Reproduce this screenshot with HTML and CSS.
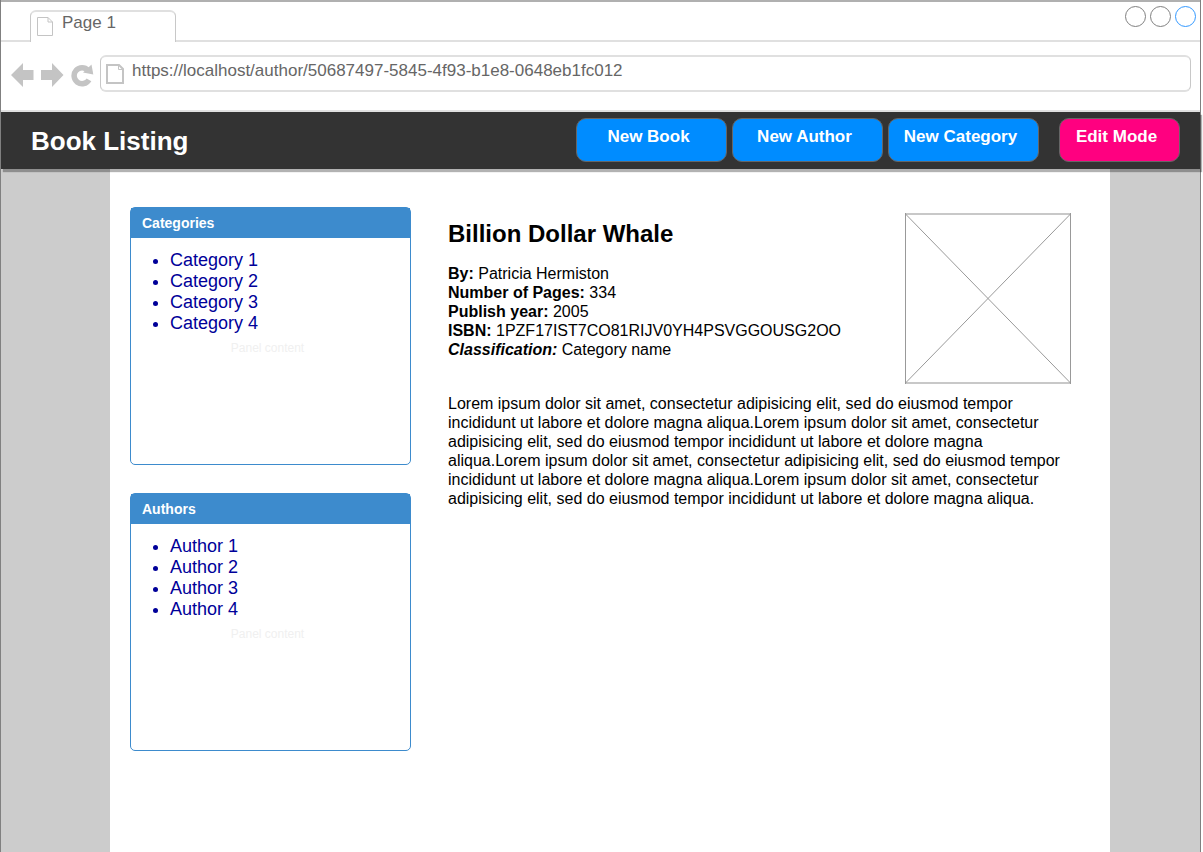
FILE: index.html
```html
<!DOCTYPE html>
<html lang="en">
<head>
<meta charset="utf-8">
<title>Book Listing</title>
<link rel="stylesheet" href="styles.css">
</head>
<body>
<div class="window">
  <div class="tab-strip">
    <div class="tab">
      <svg class="tab-icon" width="16" height="19" viewBox="0 0 16 19" fill="none" stroke="#c4c4c4"><path d="M.5 .5H11L15.500 5V18.500H.5ZM11 .5V5H15.500"/></svg>
      <span class="tab-title">Page 1</span>
    </div>
    <div class="window-controls">
      <button class="control" aria-label="Minimize"></button>
      <button class="control" aria-label="Maximize"></button>
      <button class="control control-close" aria-label="Close"></button>
    </div>
  </div>
  <div class="toolbar">
    <button class="nav" aria-label="Back"><svg width="23" height="26" viewBox="0 0 23 26" fill="#c4c4c4"><path d="M0 13L12 1V8H22.500V18H12V25Z"/></svg></button>
    <button class="nav nav-forward" aria-label="Forward"><svg width="23" height="26" viewBox="0 0 23 26" fill="#c4c4c4"><path d="M22.500 13L11 1V8H0V18H11V25Z"/></svg></button>
    <button class="nav nav-reload" aria-label="Reload"><svg width="23" height="26" viewBox="0 0 23 26"><path d="M17 8.300A8 8 0 1 0 18 17.800" fill="none" stroke="#c4c4c4" stroke-width="5.500"/><path d="M20.500 2.500L22.300 12.500L12 10.500Z" fill="#c4c4c4"/></svg></button>
    <label class="address">
      <svg width="18" height="20" viewBox="0 0 18 20" fill="none" stroke="#c4c4c4"><path d="M1 1H13L17 5V19H1Z" stroke-width="2"/><path d="M12.500 1V5.500H17"/></svg>
      <input class="url" type="text" aria-label="Address" value="https://localhost/author/50687497-5845-4f93-b1e8-0648eb1fc012">
    </label>
  </div>
  <header class="header">
    <h1 class="brand">Book Listing</h1>
    <div class="actions">
      <button class="action">New Book</button>
      <button class="action">New Author</button>
      <button class="action">New Category</button>
      <button class="action action-edit">Edit Mode</button>
    </div>
  </header>
  <div class="backdrop">
    <div class="page">
      <aside class="sidebar">
        <section class="panel">
          <h2 class="panel-title">Categories</h2>
          <ul class="links">
            <li><a href="#">Category 1</a></li>
            <li><a href="#">Category 2</a></li>
            <li><a href="#">Category 3</a></li>
            <li><a href="#">Category 4</a></li>
          </ul>
          <p class="panel-note">Panel content</p>
        </section>
        <section class="panel">
          <h2 class="panel-title">Authors</h2>
          <ul class="links">
            <li><a href="#">Author 1</a></li>
            <li><a href="#">Author 2</a></li>
            <li><a href="#">Author 3</a></li>
            <li><a href="#">Author 4</a></li>
          </ul>
          <p class="panel-note">Panel content</p>
        </section>
      </aside>
      <main class="book">
        <div class="summary">
          <div class="details">
            <h2 class="book-title">Billion Dollar Whale</h2>
            <div><b>By:</b> Patricia Hermiston</div>
            <div><b>Number of Pages:</b> 334</div>
            <div><b>Publish year:</b> 2005</div>
            <div><b>ISBN:</b> 1PZF17IST7CO81RIJV0YH4PSVGGOUSG2OO</div>
            <div><b><i>Classification:</i></b> Category name</div>
          </div>
          <svg class="cover" width="166" height="171" viewBox="0 0 166 171" fill="none"><path d="M0 1H166M0 170H166" stroke="#c8c8c8" stroke-width="2"/><path d="M.5 0V171M165.500 0V171" stroke="#999"/><path d="M.5 1L165.500 170M165.500 1L.5 170" stroke="#999"/></svg>
        </div>
        <p class="description">Lorem ipsum dolor sit amet, consectetur adipisicing elit, sed do eiusmod tempor incididunt ut labore et dolore magna aliqua.Lorem ipsum dolor sit amet, consectetur adipisicing elit, sed do eiusmod tempor incididunt ut labore et dolore magna aliqua.Lorem ipsum dolor sit amet, consectetur adipisicing elit, sed do eiusmod tempor incididunt ut labore et dolore magna aliqua.Lorem ipsum dolor sit amet, consectetur adipisicing elit, sed do eiusmod tempor incididunt ut labore et dolore magna aliqua.</p>
      </main>
    </div>
  </div>
</div>
</body>
</html>
```
FILE: styles.css
```css
* { box-sizing: border-box; }
body {
  margin: 0;
  background: #fff;
  color: #000;
  font: 16px/19px "Liberation Sans", Arial, sans-serif;
}
h1, h2, p, ul { margin: 0; padding: 0; }
button { padding: 0; border: 0; background: none; font: inherit; }
svg { display: block; flex: none; }

.window {
  display: flex;
  flex-direction: column;
  min-height: 100vh;
  margin-right: 2px;
  border: solid #808080;
  border-width: 0 1px;
}
.tab-strip {
  display: flex;
  justify-content: space-between;
  height: 42px;
  padding: 0 4px 0 29px;
  border-top: 2px solid #b0b0b0;
  border-bottom: 2px solid #e0e0e0;
}
.tab {
  display: flex;
  gap: 9px;
  width: 146px;
  height: 32px;
  margin-top: 8px;
  padding-left: 6px;
  border: 1px solid #c8c8c8;
  border-top: 2px solid #e0e0e0;
  border-bottom: 0;
  border-radius: 6px 6px 0 0;
  background: #fff;
}
.tab-icon { margin-top: 5px; }
.tab-title { font-size: 17px; line-height: 22px; color: #666; }
.window-controls { display: flex; gap: 4px; padding-top: 4px; }
.control {
  width: 21px;
  height: 21px;
  border: 1px solid #808080;
  border-radius: 50%;
}
.control-close { border-color: #3399ff; }

.toolbar {
  display: flex;
  align-items: flex-start;
  height: 70px;
  padding: 13px 9px 0 10px;
  border-bottom: 2px solid #e0e0e0;
}
.nav { margin-top: 7px; }
.nav-forward { margin-left: 7px; }
.nav-reload { margin-right: 6px; margin-left: 7px; }
.address {
  display: flex;
  align-items: flex-start;
  flex: 1;
  gap: 8px;
  height: 37px;
  padding: 4px 6px 0 5px;
  border: solid #c8c8c8;
  border-width: 2px 1px;
  border-top-color: #e0e0e0;
  border-bottom-color: #e0e0e0;
  border-radius: 6px;
}
.address svg { margin-top: 3px; }
.url {
  flex: 1;
  min-width: 0;
  height: 20px;
  padding: 0;
  border: 0;
  outline: 0;
  background: none;
  color: #666;
  font: 17px/20px "Liberation Sans", Arial, sans-serif;
}

.header {
  position: relative;
  display: flex;
  justify-content: space-between;
  align-items: flex-start;
  height: 57px;
  padding: 6px 20px 0 30px;
  background: #333;
  color: #fff;
  box-shadow: 2px 3px 1px rgba(0, 0, 0, 0.3);
}
.brand { font-size: 26px; line-height: 46px; }
.actions { display: flex; gap: 5px; }
.action {
  width: 151px;
  height: 44px;
  padding: 0 6px 7px 0;
  border: 1px solid #666;
  border-radius: 10px;
  background: #008cff;
  color: #fff;
  font-size: 17px;
  font-weight: bold;
}
.action-edit { width: 121px; margin-left: 15px; background: #ff0080; }

.backdrop {
  display: flex;
  flex: 1;
  padding: 0 90px 0 109px;
  background: #ccc;
}
.page {
  display: flex;
  flex: 1;
  gap: 37px;
  padding: 38px 39px 0 20px;
  background: #fff;
}
.sidebar { display: flex; flex: none; flex-direction: column; gap: 28px; width: 281px; }
.panel {
  min-height: 258px;
  border: 1px solid #3d8bcd;
  border-radius: 5px;
}
.panel-title {
  height: 30px;
  padding-left: 11px;
  background: #3d8bcd;
  color: #fff;
  font-size: 14px;
  line-height: 30px;
}
.links { padding: 12px 0 0 39px; color: #000099; font-size: 18px; line-height: 21px; }
.links a { color: inherit; text-decoration: none; }
.panel-note {
  padding: 7px 6px 0 0;
  color: #f0f0f0;
  font-size: 12px;
  line-height: 14px;
  text-align: center;
}

.book { flex: 1; min-width: 0; padding-top: 6px; }
.summary { display: flex; justify-content: space-between; }
.book-title { margin: 7px 0 16px; font-size: 24px; line-height: 28px; }
.description { margin-top: 10px; }
```
